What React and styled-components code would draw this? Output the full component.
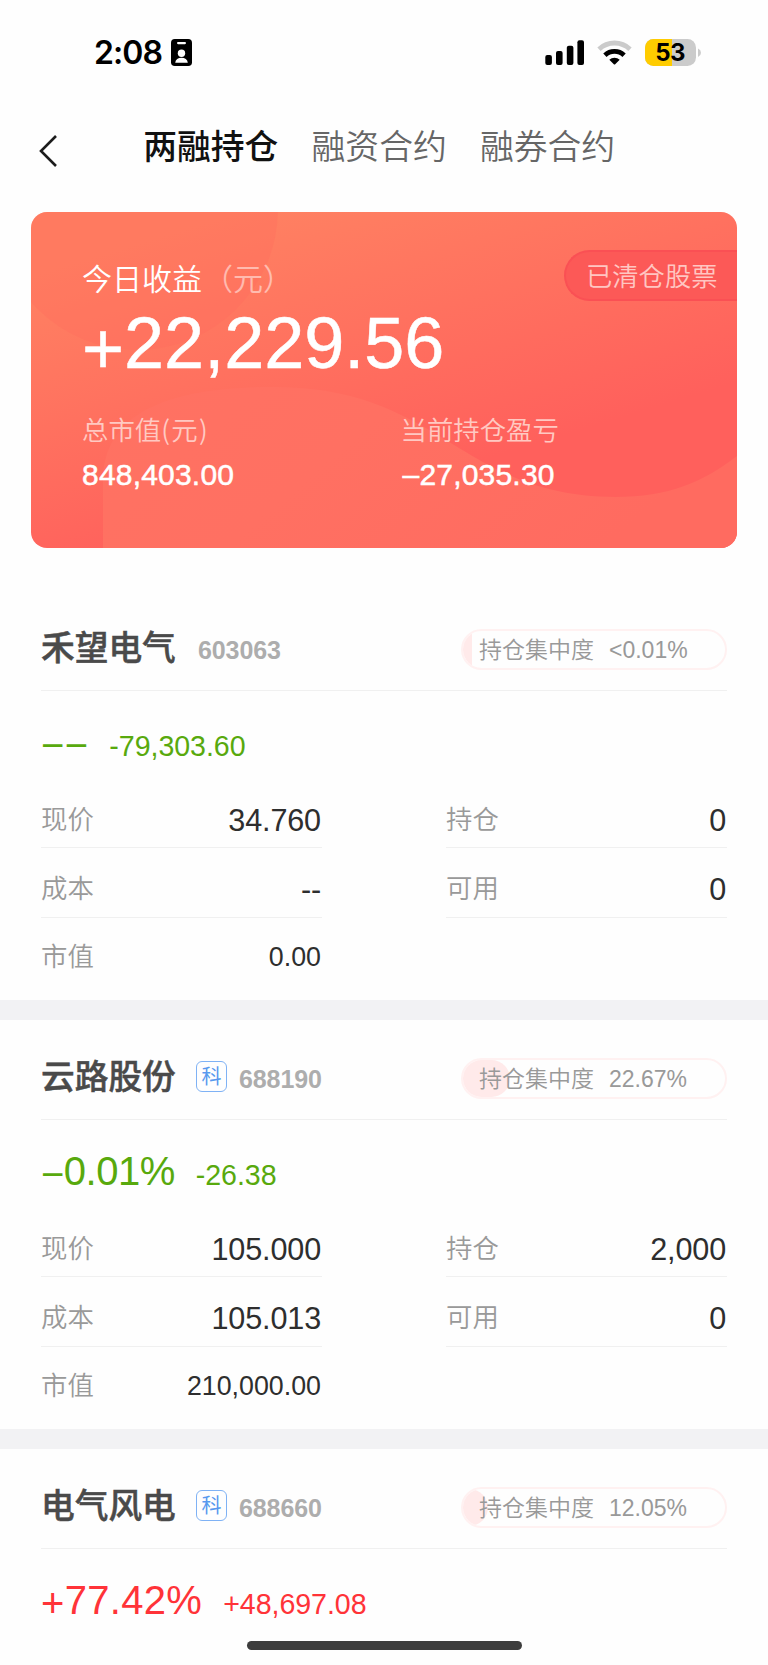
import React from 'react'
import styled, { createGlobalStyle } from 'styled-components'

const stocks = [
  {
    name: '禾望电气', code: '603063', star: false, ratio: '<0.01%', fill: 10,
    sign: '−−', percent: '', profit: '-79,303.60', color: '#58a90d',
    price: '34.760', cost: '--', value: '0.00', hold: '0', usable: '0',
  },
  {
    name: '云路股份', code: '688190', star: true, ratio: '22.67%', fill: 48,
    sign: '−', percent: '0.01%', profit: '-26.38', color: '#58a90d', tight: true,
    price: '105.000', cost: '105.013', value: '210,000.00', hold: '2,000', usable: '0',
  },
  {
    name: '电气风电', code: '688660', star: true, ratio: '12.05%', fill: 26,
    sign: '+', percent: '77.42%', profit: '+48,697.08', color: '#ff3338',
  },
]

function StatusIcons() {
  return (
    <svg width="158" height="30" viewBox="544 37 158 30">
      <rect x="545.3" y="54" width="6.6" height="10" rx="2" />
      <rect x="556" y="50" width="6.6" height="14" rx="2" />
      <rect x="566.8" y="44.7" width="6.6" height="19.3" rx="2" />
      <rect x="577.4" y="39.3" width="6.6" height="24.7" rx="2" />
      <g fill="none">
        <path d="M599 48.2A22.5 22.5 0 0 1 630 48.2" stroke="#cbcbcb" strokeWidth="4.8" />
        <path d="M604.9 54.2A14 14 0 0 1 624.1 54.2" stroke="#000" strokeWidth="4.8" />
      </g>
      <path d="M609.3 58.7A7.6 7.6 0 0 1 619.7 58.7L615.2 63.2Q614.5 63.8 613.8 63.2Z" />
      <clipPath id="cell"><rect x="645" y="38" width="51" height="27" rx="8.5" /></clipPath>
      <g clipPath="url(#cell)">
        <rect x="645" y="38" width="51" height="27" fill="#cbcbcb" />
        <rect x="645" y="38" width="27" height="27" fill="#ffcc00" />
      </g>
      <path d="M698 47.5Q701 49 701 51.8T698 56Z" fill="#cbcbcb" />
      <text x="670.2" y="60.3" textAnchor="middle" fontFamily="Inter" fontWeight="700" fontSize="24" letterSpacing="-0.5">53</text>
    </svg>
  )
}

function IdIcon() {
  return (
    <svg width="21" height="27" viewBox="0 0 21 27">
      <rect width="21" height="27" rx="3.8" />
      <rect x="6" y="3" width="9" height="2.2" rx="1.1" fill="#fff" />
      <circle cx="10.5" cy="14.2" r="3.7" fill="#fff" />
      <path d="M4.2 23.8C4.6 20.6 7 18.8 10.5 18.8S16.4 20.6 16.8 23.8Z" fill="#fff" />
    </svg>
  )
}

function CardWaves() {
  return (
    <Waves viewBox="0 0 706 336" preserveAspectRatio="none">
      <defs>
        <linearGradient id="wave" x1="0" y1="0" x2="1" y2="0.3">
          <stop offset="0" stopColor="#ff7262" />
          <stop offset="0.45" stopColor="#ff7062" />
          <stop offset="1" stopColor="#ff6b60" />
        </linearGradient>
      </defs>
      <circle cx="106" cy="-3" r="141" fill="#ff6b5e" fillOpacity="0.3" />
      <path
        d="M72 336V270C72 210 120 175 243 175C410 175 430 285 584 285C638 285 672 270 706 244V336Z"
        fill="url(#wave)"
      />
    </Waves>
  )
}

function Cell({ label, value, small, row }) {
  return (
    <Field $row={row}>
      <Label>{label}</Label>
      <Value $small={small}>{value}</Value>
    </Field>
  )
}

function Stock({ stock }) {
  return (
    <Section>
      <StockHeader>
        <Name>{stock.name}</Name>
        {stock.star && <Tag>科</Tag>}
        <Code $tagged={stock.star}>{stock.code}</Code>
        <Pill>
          <PillFill $flat={stock.fill < 20} style={{ width: stock.fill }} />
          <PillText>持仓集中度<PillValue>{stock.ratio}</PillValue></PillText>
        </Pill>
      </StockHeader>
      <Profit $color={stock.color}>
        <Percent $tight={stock.tight}><Sign>{stock.sign}</Sign>{stock.percent}</Percent>
        <Amount>{stock.profit}</Amount>
      </Profit>
      {stock.price && (
        <Columns>
          <div>
            <Cell row={1} label="现价" value={stock.price} />
            <Cell row={2} label="成本" value={stock.cost} />
            <Cell row={3} label="市值" value={stock.value} small />
          </div>
          <div>
            <Cell row={1} label="持仓" value={stock.hold} />
            <Cell row={2} label="可用" value={stock.usable} />
          </div>
        </Columns>
      )}
    </Section>
  )
}

function App() {
  return (
    <Page>
      <GlobalStyle />
      <StatusBar>
        <Clock>2:08</Clock>
        <IdIcon />
        <Spacer />
        <StatusIcons />
      </StatusBar>
      <NavBar>
        <Back width="20" height="34" viewBox="0 0 20 34">
          <path d="M17 2L2 17L17 32" fill="none" stroke="#1c1c1c" strokeWidth="2.6" />
        </Back>
        <Tab $active>两融持仓</Tab>
        <Tab>融资合约</Tab>
        <Tab>融券合约</Tab>
      </NavBar>
      <Card>
        <CardWaves />
        <CardTop>
          <CardTitle>今日收益<Unit>（元）</Unit></CardTitle>
          <Cleared>已清仓股票</Cleared>
        </CardTop>
        <Income><Sign>+</Sign>22,229.56</Income>
        <CardStats>
          <div>
            <StatLabel>总市值<Paren>(元)</Paren></StatLabel>
            <StatValue>848,403.00</StatValue>
          </div>
          <div>
            <StatLabel>当前持仓盈亏</StatLabel>
            <StatValue $indent>–27,035.30</StatValue>
          </div>
        </CardStats>
      </Card>
      <List>
        {stocks.map((s) => <Stock key={s.code} stock={s} />)}
      </List>
      <HomeIndicator />
    </Page>
  )
}

export default App

const GlobalStyle = createGlobalStyle`
  * {
    box-sizing: border-box;
  }
  body {
    margin: 0;
    background: #fff;
  }
`;

const Page = styled.div`
  position: relative;
  width: 768px;
  height: 1665px;
  overflow: hidden;
  background: #fefefe;
  font-family: "Liberation Sans", "Noto Sans CJK SC", sans-serif;
  white-space: nowrap;
`;

const StatusBar = styled.div`
  display: flex;
  align-items: center;
  height: 105px;
  padding: 0 66px 0 94px;
`;

const Clock = styled.div`
  margin-right: 9px;
  font: 600 32px/36px Inter, sans-serif;
  letter-spacing: -0.9px;
`;

const Spacer = styled.div`
  flex: 1;
`;

const NavBar = styled.div`
  display: flex;
  align-items: center;
  gap: 33.2px;
  height: 107px;
  padding: 0 39px 27px;
`;

const Back = styled.svg`
  margin: 11px 51px 0 0;
`;

const Tab = styled.div`
  font-family: "Noto Sans CJK SC", sans-serif;
  font-size: 33.8px;
  line-height: 50px;
  font-weight: ${(p) => (p.$active ? 500 : 350)};
  color: ${(p) => (p.$active ? '#111' : '#666')};
`;

const Card = styled.div`
  position: relative;
  height: 336px;
  margin: 0 31px;
  border-radius: 16px;
  overflow: hidden;
  color: #fff;
  background: linear-gradient(163deg, #ff8262 10%, #ff605c 70%);
`;

const Waves = styled.svg`
  position: absolute;
  inset: 0;
  width: 100%;
  height: 100%;
`;

const CardTop = styled.div`
  position: relative;
  display: flex;
  justify-content: space-between;
  padding: 38px 0 0 51px;
`;

const CardTitle = styled.div`
  padding-top: 5px;
  font: 350 30px/44px "Noto Sans CJK SC", sans-serif;
`;

const Unit = styled.span`
  margin-left: 1px;
  opacity: 0.5;
`;

const Cleared = styled.div`
  width: 173px;
  height: 51px;
  padding-left: 20px;
  border: 2px solid #fa5054;
  border-right: 0;
  border-radius: 26px 0 0 26px;
  background: #fc5957;
  color: #ffc6c2;
  font: 350 26.3px/46px "Noto Sans CJK SC", sans-serif;
`;

/* plus and minus sit lower than the font puts them */
const Sign = styled.span`
  vertical-align: -0.07em;
  line-height: 0;
`;

const Income = styled.div`
  position: relative;
  padding: 0 0 0 51px;
  height: 85px;
  font-size: 72px;
  line-height: 84px;
  -webkit-text-stroke: 0.5px #fff;
`;

const CardStats = styled.div`
  position: relative;
  display: grid;
  grid-template-columns: 318.5px 1fr;
  padding: 23px 0 0 51px;
`;

const StatLabel = styled.div`
  color: #ffc9c2;
  font: 350 26.4px/40px "Noto Sans CJK SC", sans-serif;
`;

const Paren = styled.span`
  letter-spacing: 1.4px;
`;

const StatValue = styled.div`
  padding: 6px 0 0 ${(p) => (p.$indent ? 2 : 0)}px;
  font-size: 30px;
  line-height: 40px;
  letter-spacing: 0.2px;
  -webkit-text-stroke: 0.5px #fff;
`;

const List = styled.div`
  padding-top: 43px;
`;

const Section = styled.div`
  height: 429px;
  padding: 0 41px;
  border-bottom: 20px solid #f2f2f4;
`;

const StockHeader = styled.div`
  display: flex;
  align-items: center;
  height: 100px;
  padding-top: 17px;
  border-bottom: 1px solid #f0f0f0;
`;

const Name = styled.div`
  width: 136px;
  margin-top: -7px;
  font: 500 33.7px/50px "Noto Sans CJK SC", sans-serif;
  color: #4a4a4a;
  -webkit-text-stroke: 0.5px #4a4a4a;
`;

const Tag = styled.div`
  width: 31px;
  height: 31px;
  margin: -4px 0 0 19px;
  border: 1px solid #7fb2f5;
  border-radius: 6px;
  color: #5799ee;
  font: 400 20px/28px "Noto Sans CJK SC", sans-serif;
  text-align: center;
`;

const Code = styled.div`
  margin: 3px 0 0 ${(p) => (p.$tagged ? 12 : 21)}px;
  color: #adadad;
  font-size: 25px;
  font-weight: 700;
  letter-spacing: -0.1px;
`;

const Pill = styled.div`
  position: relative;
  width: 266px;
  height: 41px;
  margin-left: auto;
  border: 2px solid #fff1f1;
  border-radius: 21px;
  overflow: hidden;
`;

const PillFill = styled.div`
  position: absolute;
  top: 0;
  bottom: 0;
  left: -1px;
  background: #ffeaea;
  border-radius: ${(p) => (p.$flat ? '0' : '0 19px 19px 0')};
`;

const PillText = styled.div`
  position: relative;
  display: flex;
  padding-left: 16px;
  color: #999;
  font: 350 23px/35px "Noto Sans CJK SC", sans-serif;
`;

const PillValue = styled.span`
  margin-left: 15px;
  line-height: 38px;
  font-family: "Liberation Sans", sans-serif;
`;

const Profit = styled.div`
  display: flex;
  align-items: baseline;
  gap: 21px;
  height: 100px;
  padding-top: 26px;
  color: ${(p) => p.$color};
`;

const Percent = styled.div`
  font-size: 40px;
  line-height: 50px;
  letter-spacing: ${(p) => (p.$tight ? -0.5 : 0.3)}px;
`;

const Amount = styled.div`
  font-size: 28.6px;
  letter-spacing: -0.05px;
`;

const Columns = styled.div`
  display: grid;
  grid-template-columns: 281px 281px;
  justify-content: space-between;
`;

const Field = styled.div`
  display: flex;
  align-items: center;
  justify-content: space-between;
  height: ${(p) => [57, 70, 76][p.$row - 1]}px;
  padding: ${(p) => (p.$row === 2 ? 11 : 0)}px 1px 0 0;
  border-bottom: ${(p) => (p.$row === 3 ? 0 : 1)}px solid #f0f0f0;
`;

const Label = styled.div`
  padding-bottom: 2px;
  color: #999;
  font: 350 26.4px/40px "Noto Sans CJK SC", sans-serif;
`;

const Value = styled.div`
  padding-top: 1px;
  color: #2e2e2e;
  font-size: ${(p) => (p.$small ? 26.8 : 30.6)}px;
  letter-spacing: ${(p) => (p.$small ? 0 : -0.15)}px;
  line-height: 40px;
`;

const HomeIndicator = styled.div`
  position: absolute;
  left: 247px;
  bottom: 15px;
  width: 275px;
  height: 9px;
  border-radius: 5px;
  background: #3d3d3d;
`;
